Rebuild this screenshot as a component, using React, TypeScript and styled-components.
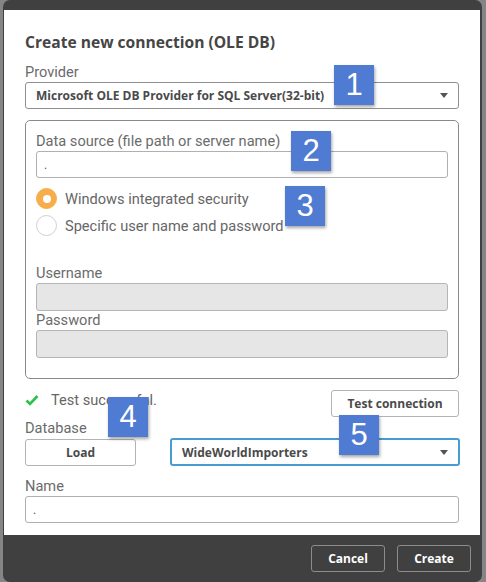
import React from "react";
import styled, { createGlobalStyle } from "styled-components";

const GlobalStyle = createGlobalStyle`
  html, body {
    margin: 0;
    padding: 0;
    background: #858585;
  }
  body {
    font-family: Roboto, "Liberation Sans", sans-serif;
  }
`;

const boldFont = `"Open Sans", Roboto, "Liberation Sans", sans-serif`;

const Page = styled.div`
  position: relative;
  width: 486px;
  height: 582px;
  overflow: hidden;
  background: #858585;
`;

const Dialog = styled.div`
  margin-left: 3px;
  width: 479px;
  height: 582px;
  background: #404040;
  border-radius: 7px;
  display: flex;
  flex-direction: column;
`;

const Body = styled.div`
  background: #fff;
  margin: 10px 2px 0 1px;
  height: 525px;
  box-sizing: border-box;
  padding: 22px 21px 0 21px;
  display: flex;
  flex-direction: column;
`;

const Title = styled.h1`
  margin: 0 0 11px;
  font-family: ${boldFont};
  font-size: 15.6px;
  line-height: 20px;
  font-weight: 700;
  color: #454545;
`;

const Label = styled.div<{ $top?: number }>`
  margin-top: ${(p) => p.$top ?? 0}px;
  margin-bottom: 1px;
  font-size: 14.6px;
  line-height: 18px;
  color: #6b6b6b;
`;

const SelectBox = styled.div<{ $active?: boolean }>`
  box-sizing: border-box;
  height: ${(p) => (p.$active ? 28 : 27)}px;
  border: ${(p) => (p.$active ? "2px solid #4a9bd1" : "1px solid #8f8f8f")};
  border-radius: 3px;
  display: flex;
  align-items: center;
  justify-content: space-between;
  padding: 0 10px;
  font-family: ${boldFont};
  font-size: 12px;
  font-weight: 700;
  color: #4a4a4a;
  background: #fff;
`;

const Caret = styled.span`
  width: 0;
  height: 0;
  border-left: 4px solid transparent;
  border-right: 4px solid transparent;
  border-top: 5px solid #555;
`;

const Fieldset = styled.div`
  margin-top: 11px;
  height: 259px;
  box-sizing: border-box;
  border: 1px solid #8a8a8a;
  border-radius: 5px;
  padding: 11px 10px 0 10px;
  display: flex;
  flex-direction: column;
`;

const Input = styled.div<{ $disabled?: boolean; $h?: number }>`
  box-sizing: border-box;
  height: ${(p) => p.$h ?? 27}px;
  border: 1px solid ${(p) => (p.$disabled ? "#b5b5b5" : "#b0b0b0")};
  border-radius: 3px;
  background: ${(p) => (p.$disabled ? "#e6e6e6" : "#fff")};
  padding-left: 7px;
  display: flex;
  align-items: center;
  font-size: 12px;
  color: #555;
`;

const RadioGroup = styled.div`
  margin-top: 7px;
  display: flex;
  flex-direction: column;
`;

const RadioRow = styled.div`
  height: 27px;
  display: flex;
  align-items: center;
  gap: 8px;
  font-size: 14.6px;
  color: #666;
`;

const Radio = styled.span<{ $checked?: boolean }>`
  box-sizing: border-box;
  width: 21px;
  height: 21px;
  border-radius: 50%;
  flex: none;
  background: ${(p) => (p.$checked ? "#f8ad4b" : "#fff")};
  border: 1px solid ${(p) => (p.$checked ? "#f8ad4b" : "#cfcfcf")};
  display: flex;
  align-items: center;
  justify-content: center;
  &::after {
    content: "";
    display: ${(p) => (p.$checked ? "block" : "none")};
    width: 8px;
    height: 8px;
    border-radius: 50%;
    background: #fff;
  }
`;

const StatusRow = styled.div`
  margin-top: 11px;
  height: 27px;
  display: flex;
  align-items: center;
  justify-content: space-between;
`;

const Status = styled.div`
  display: flex;
  align-items: center;
  gap: 12px;
  font-size: 14.6px;
  color: #666;
  margin-top: -8px;
`;

const Button = styled.button<{ $w: number }>`
  box-sizing: border-box;
  width: ${(p) => p.$w}px;
  height: 27px;
  border: 1px solid #b3b3b3;
  border-radius: 3px;
  background: #fff;
  font-family: ${boldFont};
  font-size: 12px;
  font-weight: 700;
  color: #4a4a4a;
  padding: 0;
  cursor: pointer;
`;

const DbRow = styled.div`
  display: flex;
  align-items: center;
  gap: 34px;
  margin-right: -1px;
  & > :last-child {
    flex: 1;
  }
`;

const Footer = styled.div`
  flex: 1;
  display: flex;
  align-items: center;
  justify-content: flex-end;
  gap: 12px;
  padding: 0 11px 0 0;
`;

const FooterButton = styled.button`
  box-sizing: border-box;
  width: 74px;
  height: 27px;
  border: 1px solid #8c8c8c;
  border-radius: 3px;
  background: transparent;
  color: #fff;
  font-family: ${boldFont};
  font-size: 12px;
  font-weight: 700;
  padding: 0;
`;

const Badge = styled.div<{ $x: number; $y: number }>`
  position: absolute;
  left: ${(p) => p.$x}px;
  top: ${(p) => p.$y}px;
  width: 40px;
  height: 40px;
  background: #4f7bd3;
  box-shadow: 1px 2px 3px rgba(0, 0, 0, 0.35);
  color: #fff;
  font-family: "Liberation Sans", Arial, sans-serif;
  font-size: 31px;
  line-height: 40px;
  text-align: center;
`;

const Check = () => (
  <svg width="14" height="12" viewBox="0 0 14 12">
    <path d="M1.5 6.5 L5 10 L12.5 2" fill="none" stroke="#27c24c" strokeWidth="2.6" />
  </svg>
);

export default function App() {
  return (
    <Page>
      <GlobalStyle />
      <Dialog>
        <Body>
          <Title>Create new connection (OLE DB)</Title>
          <Label>Provider</Label>
          <SelectBox>
            <span>Microsoft OLE DB Provider for SQL Server(32-bit)</span>
            <Caret />
          </SelectBox>
          <Fieldset>
            <Label>Data source (file path or server name)</Label>
            <Input>.</Input>
            <RadioGroup>
              <RadioRow>
                <Radio $checked />
                Windows integrated security
              </RadioRow>
              <RadioRow>
                <Radio />
                Specific user name and password
              </RadioRow>
            </RadioGroup>
            <Label $top={25}>Username</Label>
            <Input $disabled $h={28} />
            <Label>Password</Label>
            <Input $disabled $h={28} />
          </Fieldset>
          <StatusRow>
            <Status>
              <Check />
              Test successful.
            </Status>
            <Button $w={128}>Test connection</Button>
          </StatusRow>
          <Label $top={2}>Database</Label>
          <DbRow>
            <Button $w={111}>Load</Button>
            <SelectBox $active>
              <span>WideWorldImporters</span>
              <Caret />
            </SelectBox>
          </DbRow>
          <Label $top={11}>Name</Label>
          <Input>.</Input>
        </Body>
        <Footer>
          <FooterButton>Cancel</FooterButton>
          <FooterButton>Create</FooterButton>
        </Footer>
      </Dialog>
      <Badge $x={334} $y={65}>1</Badge>
      <Badge $x={291} $y={131}>2</Badge>
      <Badge $x={285} $y={186}>3</Badge>
      <Badge $x={108} $y={397}>4</Badge>
      <Badge $x={339} $y={415}>5</Badge>
    </Page>
  );
}
